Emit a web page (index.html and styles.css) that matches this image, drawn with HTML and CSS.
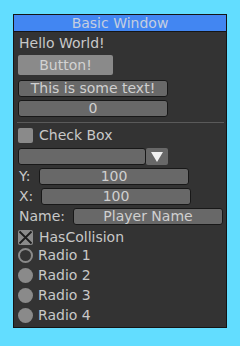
FILE: index.html
```html
<!DOCTYPE html>
<html>

<head>
   <meta name="viewport" content="width=device-width, initial-scale=1.0">
   <title>Basic Window</title>
   <link rel="stylesheet" href="styles.css">
</head>

<body>
   <div class="window">
      <div class="title">Basic Window</div>
      <div class="content">
         <div class="label-line">Hello World!</div>
         <div class="button">Button!</div>
         <div class="field field-text">This is some text!</div>
         <div class="field field-num">0</div>
         <div class="separator"></div>

         <div class="check-row row-check">
            <span class="checkbox"></span>
            <span class="check-label">Check Box</span>
         </div>

         <div class="dropdown">
            <div class="field dropdown-box"></div>
            <div class="dropdown-arrow"><span class="triangle"></span></div>
         </div>

         <div class="input-row row-y">
            <span class="input-label label-y">Y:</span>
            <div class="field">100</div>
         </div>
         <div class="input-row row-x">
            <span class="input-label label-x">X:</span>
            <div class="field">100</div>
         </div>
         <div class="input-row row-name">
            <span class="input-label label-name">Name:</span>
            <div class="field">Player Name</div>
         </div>

         <div class="check-row row-collision">
            <span class="checkbox checked">
               <svg width="15" height="15" viewBox="0 0 15 15">
                  <path d="M1.5 1.5 L13.5 13.5 M13.5 1.5 L1.5 13.5" stroke="#1e1e1e" stroke-width="1.8" fill="none"/>
               </svg>
            </span>
            <span class="check-label">HasCollision</span>
         </div>

         <div class="radio-row row-r1">
            <span class="radio active"></span>
            <span class="radio-label">Radio 1</span>
         </div>
         <div class="radio-row">
            <span class="radio"></span>
            <span class="radio-label">Radio 2</span>
         </div>
         <div class="radio-row">
            <span class="radio"></span>
            <span class="radio-label">Radio 3</span>
         </div>
         <div class="radio-row">
            <span class="radio"></span>
            <span class="radio-label">Radio 4</span>
         </div>
      </div>
   </div>
</body>

</html>
```

FILE: styles.css
```css
body {
   margin: 0;
   padding: 14px 13px;
   background-color: #62ddff;
   font-family: "DejaVu Sans", sans-serif;
   font-size: 14px;
   color: #c8c8c8;
}

.window {
   width: 214px;
   height: 314px;
   box-sizing: border-box;
   border: 1px solid #151515;
   background-color: #333333;
}

.title {
   height: 16px;
   line-height: 16px;
   background-color: #4286f2;
   border-bottom: 1px solid #151515;
   color: #c4cee0;
   text-align: center;
}

.content {
   display: flex;
   flex-direction: column;
   align-items: flex-start;
   padding: 0 3px 0 4px;
}

.label-line {
   margin-top: 3px;
   height: 16px;
   line-height: 16px;
   padding-left: 1px;
}

.button {
   margin-top: 4px;
   width: 95px;
   height: 20px;
   line-height: 20px;
   background-color: #8a8a8a;
   border-radius: 2px;
   color: #d2d2d2;
   text-align: center;
}

.field {
   width: 150px;
   height: 17px;
   line-height: 15px;
   box-sizing: border-box;
   border: 1px solid #181818;
   border-radius: 3px;
   background-color: #686868;
   color: #d0d0d0;
   text-align: center;
}

.field-text {
   margin-top: 5px;
}

.field-num {
   margin-top: 3px;
}

.separator {
   margin-top: 5px;
   margin-left: -1px;
   width: 207px;
   height: 1px;
   background-color: #5a5a5a;
}

.check-row,
.radio-row {
   display: flex;
   align-items: center;
   height: 15px;
}

.row-check {
   margin-top: 5px;
}

.row-collision {
   margin-top: 5px;
}

.checkbox {
   width: 15px;
   height: 15px;
   border-radius: 2px;
   background-color: #8a8a8a;
   display: flex;
}

.check-label {
   margin-left: 6px;
   line-height: 15px;
}

.dropdown {
   display: flex;
   margin-top: 5px;
}

.dropdown-box {
   width: 128px;
}

.dropdown-arrow {
   width: 22px;
   height: 17px;
   border-radius: 2px;
   background-color: #686868;
   display: flex;
   align-items: center;
   justify-content: center;
}

.triangle {
   width: 0;
   height: 0;
   border-left: 6px solid transparent;
   border-right: 6px solid transparent;
   border-top: 10px solid #f0f0f0;
}

.input-row {
   display: flex;
   align-items: center;
   margin-top: 3px;
}

.input-label {
   padding-left: 1px;
   box-sizing: border-box;
   line-height: 17px;
}

.label-y {
   width: 21px;
}

.label-x {
   width: 23px;
}

.label-name {
   width: 55px;
}

.radio-row {
   margin-top: 5px;
}

.row-r1 {
   margin-top: 3px;
}

.radio {
   width: 15px;
   height: 15px;
   border-radius: 50%;
   background-color: #8a8a8a;
   box-sizing: border-box;
}

.radio.active {
   background-color: #333333;
   border: 2px solid #8a8a8a;
}

.radio-label {
   margin-left: 5px;
   line-height: 15px;
}
```
